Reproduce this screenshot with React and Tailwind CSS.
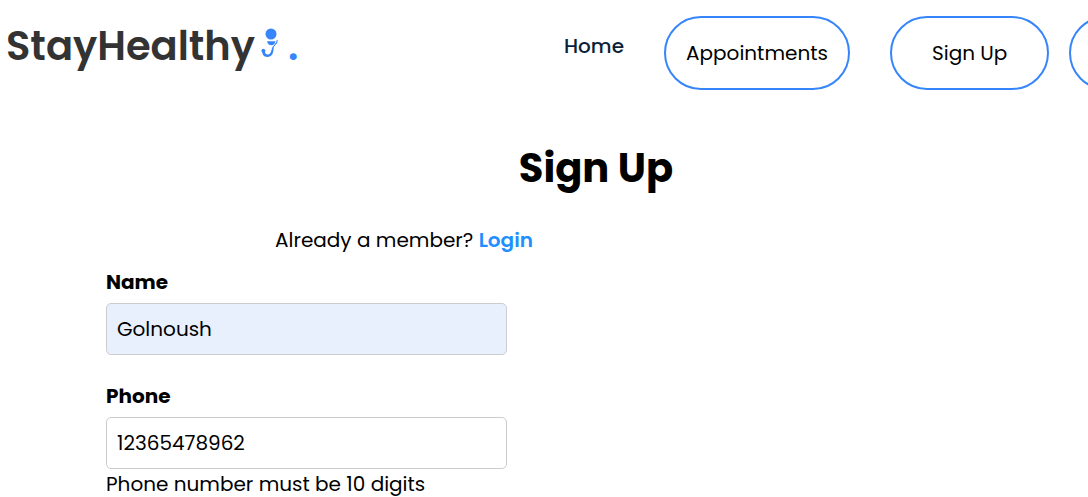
import { useState } from "react";

const pill =
  "h-[74px] shrink-0 rounded-full border-2 border-[#3685fb] bg-white text-center text-xl text-black";

function LogoMark() {
  return (
    <svg viewBox="0 0 18 32" className="h-8 w-[18px] fill-[#3685fb]" aria-hidden="true">
      <circle cx="11" cy="7" r="5.5" />
      <path d="M7 14.300h8.500c-.5 2.500-2 3.900-4.200 3.900s-3.800-1.400-4.300-3.900z" />
      <path d="M13.400 19.400c-1.400 1.400-1.700 2.600-2.100 4.400-.5 2.400-1.800 3.700-3.600 3.700-1.600 0-2.500-.9-2.700-2.500a2 2 0 1 0-2.800.4c.5 2.900 2.500 4.600 5.400 4.600 3.100 0 4.900-1.900 5.600-5.200.4-2 .6-3.500.2-5.400z" />
      <path
        d="M12.800 21c.4-1.600 1.600-2.200 2.600-3.500 1.100-1.400 1.700-2.800 1.900-4.500M13 19.800c1.600-1.500 2.700-2.800 4-5"
        className="fill-none stroke-[#3685fb] stroke-1"
      />
    </svg>
  );
}

function Field({ id, label, tinted, error, value, onChange }) {
  return (
    <div className="flex flex-col">
      <label htmlFor={id} className="mb-1.5 text-xl leading-[30px] font-bold">
        {label}
      </label>
      <input
        id={id}
        value={value}
        onChange={(e) => onChange(e.target.value)}
        className={`h-[52px] w-full rounded-[5px] border border-[#ccc] px-2.5 text-xl outline-none ${
          tinted ? "bg-[#e8f0fe]" : "bg-white"
        }`}
      />
      {error && <p className="text-xl leading-[30px]">{error}</p>}
    </div>
  );
}

export default function App() {
  const [name, setName] = useState("Golnoush");
  const [phone, setPhone] = useState("12365478962");

  return (
    <div className="overflow-hidden bg-white font-[Poppins,Inter,sans-serif] text-black">
      <header className="flex items-start pt-4 pl-1.5">
        <a href="#home" className="flex min-w-[558px] shrink-0 items-center text-[#333]">
          <span className="min-w-[254px] text-[40px] leading-[60px] font-semibold">StayHealthy</span>
          <span className="pb-1.5">
            <LogoMark />
          </span>
          <span className="pl-2.5 text-[40px] leading-[60px] font-semibold text-[#3685fb]">.</span>
        </a>
        <nav className="flex shrink-0 items-start">
          <a href="#home" className="mr-10 min-w-[60px] text-xl leading-[60px] font-medium text-[#0b1f3a]">
            Home
          </a>
          <button type="button" className={`${pill} mr-10 min-w-[186px] px-5`}>
            Appointments
          </button>
          <button type="button" className={`${pill} mr-5 min-w-[159px] px-10`}>
            Sign Up
          </button>
          <button type="button" className={`${pill} min-w-[137px] px-10`}>
            Login
          </button>
        </nav>
      </header>

      <main className="pt-12 pr-0.5 pl-[106px]">
        <h1 className="text-center text-[40px] leading-[60px] font-bold">Sign Up</h1>
        <p className="mt-[27px] w-[596px] text-center text-xl leading-[30px]">
          Already a member?{" "}
          <a href="#login" className="font-semibold text-[#2190ff]">
            Login
          </a>
        </p>
        <form className="mt-3 flex w-[401px] flex-col gap-[26px]">
          <Field id="name" label="Name" tinted value={name} onChange={setName} />
          <Field
            id="phone"
            label="Phone"
            value={phone}
            onChange={setPhone}
            error="Phone number must be 10 digits"
          />
        </form>
      </main>
    </div>
  );
}
